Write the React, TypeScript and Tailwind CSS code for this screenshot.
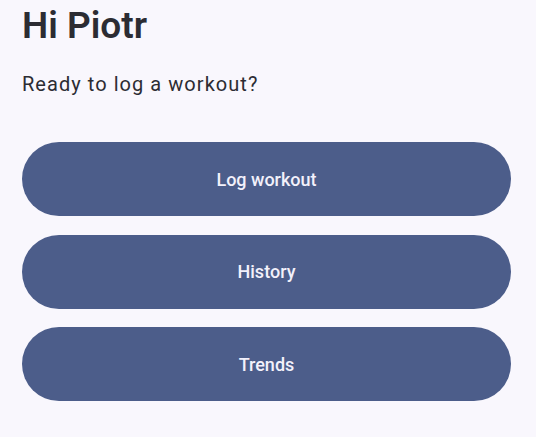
import React from "react";

export default function App() {
  const items = ["Log workout", "History", "Trends"];
  return (
    <div className="w-[536px] h-[437px] bg-[#f9f7fd] pl-[22px] pr-[25px] pt-[4px]" style={{ fontFamily: "Roboto, sans-serif" }}>
      <h1 className="text-[37px] leading-[44px] font-semibold text-[#2c2c33] tracking-[0px]">Hi Piotr</h1>
      <p className="mt-[22px] text-[20px] leading-[28px] text-[#2c2c33] tracking-[1.05px]">Ready to log a workout?</p>
      <div className="mt-[44px] flex flex-col gap-[18.5px]">
        {items.map((t) => (
          <button key={t} className="h-[74px] w-full rounded-full bg-[#4c5d8a] text-[#f3f1fb] text-[18px] font-medium flex items-center justify-center">
            {t}
          </button>
        ))}
      </div>
    </div>
  );
}
